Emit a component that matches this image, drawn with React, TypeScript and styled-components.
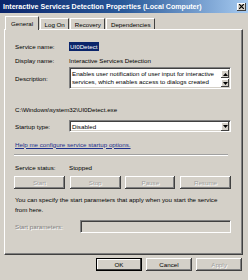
import React from "react";
import styled, { createGlobalStyle, css } from "styled-components";

const Global = createGlobalStyle`
  html, body { margin: 0; padding: 0; background: #d4d0c8; }
  body { font-family: "Liberation Sans", Arial, sans-serif; font-size: 6.2px; color: #000; }
`;

const Window = styled.div`
  width: 248px;
  height: 280px;
  background: #d4d0c8;
  display: flex;
  flex-direction: column;
  overflow: hidden;
`;

const TitleBar = styled.div`
  height: 13px;
  background: linear-gradient(to right, #0a246a 0%, #2a5a9a 50%, #a6caf0 100%);
  display: flex;
  align-items: center;
  padding: 0 2px 0 3px;
  justify-content: space-between;
`;

const TitleText = styled.span`
  color: #fff;
  font-weight: bold;
  font-size: 7.1px;
  white-space: nowrap;
`;

const CloseBtn = styled.div`
  width: 9px;
  height: 8px;
  background: #d4d0c8;
  box-shadow: inset -1px -1px #404040, inset 1px 1px #fff;
  display: flex;
  align-items: center;
  justify-content: center;
`;

const TabStrip = styled.div`
  display: flex;
  align-items: flex-end;
  margin: 3px 0 0 5px;
  height: 13px;
  position: relative;
  z-index: 1;
`;

const Tab = styled.div<{ $active?: boolean }>`
  height: 11px;
  padding: 0 3.5px;
  margin-right: 1px;
  background: #d4d0c8;
  border-top: 1px solid #fff;
  border-left: 1px solid #fff;
  border-right: 1px solid #404040;
  box-sizing: border-box;
  display: flex;
  align-items: center;
  white-space: nowrap;
  ${(p) =>
    p.$active &&
    css`
      margin-bottom: -1px;
      height: 14px;
      padding: 0 5px;
    `}
`;

const Panel = styled.div`
  margin: 0 5px 0 4px;
  height: 226px;
  box-sizing: border-box;
  border-top: 1px solid #fff;
  border-left: 1px solid #fff;
  border-right: 1px solid #404040;
  border-bottom: 1px solid #404040;
  box-shadow: inset -1px -1px #808080;
  padding: 0 11px 0 10px;
  display: flex;
  flex-direction: column;
`;

const Row = styled.div<{ $h: number; $mt?: number }>`
  display: flex;
  align-items: center;
  height: ${(p) => p.$h}px;
  margin-top: ${(p) => p.$mt ?? 0}px;
  white-space: nowrap;
`;

const Label = styled.span<{ $w?: number; $disabled?: boolean }>`
  width: ${(p) => p.$w ?? 54}px;
  flex: none;
  ${(p) =>
    p.$disabled &&
    css`
      color: #808080;
      text-shadow: 1px 1px 0 #fff;
    `}
`;

const Selected = styled.span`
  background: #0a246a;
  color: #fff;
  padding: 1px 1px;
  outline: 1px dotted #d4d0c8;
`;

const Sunken = styled.div<{ $bg?: string }>`
  box-sizing: border-box;
  background: ${(p) => p.$bg ?? "#fff"};
  border-top: 1px solid #808080;
  border-left: 1px solid #808080;
  border-right: 1px solid #fff;
  border-bottom: 1px solid #fff;
  box-shadow: inset 1px 1px #404040, inset -1px -1px #d4d0c8;
`;

const DescBox = styled(Sunken)`
  flex: 1;
  height: 22px;
  display: flex;
  padding: 1px;
`;

const DescText = styled.div`
  flex: 1;
  padding: 1px 0 0 1px;
  line-height: 8px;
  white-space: normal;
  overflow: hidden;
`;

const ScrollCol = styled.div`
  width: 8px;
  display: flex;
  flex-direction: column;
  gap: 1px;
  padding-top: 1px;
`;

const ScrollBtn = styled.div`
  width: 8px;
  height: 9px;
  box-sizing: border-box;
  background: #d4d0c8;
  box-shadow: inset -1px -1px #404040, inset 1px 1px #fff;
  display: flex;
  align-items: center;
  justify-content: center;
`;

const Combo = styled(Sunken)`
  flex: 1;
  height: 12px;
  display: flex;
  align-items: center;
  padding: 0 1px 0 2px;
  justify-content: space-between;
`;

const Link = styled.span`
  color: #1c2f8c;
  text-decoration: underline;
`;

const Separator = styled.div`
  height: 0;
  border-top: 1px solid #a0a0a0;
  border-bottom: 1px solid #fff;
  margin: 5px 3px 0 -1px;
`;

const ButtonRow = styled.div`
  display: flex;
  justify-content: space-between;
  margin-top: 4px;
  margin-left: -1px;
`;

const Btn = styled.div<{ $w?: number; $disabled?: boolean; $default?: boolean }>`
  width: ${(p) => p.$w ?? 51}px;
  height: 13px;
  box-sizing: border-box;
  background: #d4d0c8;
  display: flex;
  align-items: center;
  justify-content: center;
  box-shadow: ${(p) =>
    p.$default
      ? "inset 0 0 0 1px #000, inset -2px -2px #404040, inset 2px 2px #fff"
      : "inset -1px -1px #404040, inset 1px 1px #fff, inset -2px -2px #808080"};
  ${(p) =>
    p.$disabled &&
    css`
      color: #a0a0a0;
      text-shadow: 1px 1px 0 #fff;
    `}
`;

const Para = styled.div`
  margin-top: 6px;
  line-height: 10px;
  white-space: normal;
  padding-right: 2px;
`;

const ParamBox = styled(Sunken)`
  flex: 1;
  height: 13px;
`;

const Footer = styled.div`
  display: flex;
  justify-content: flex-end;
  gap: 4px;
  padding-right: 6px;
  margin-top: 3px;
`;

const Arrow: React.FC<{ up?: boolean }> = ({ up }) => (
  <svg width="5" height="3" viewBox="0 0 5 3">
    <path d={up ? "M2.5 0 L5 3 L0 3 Z" : "M0 0 L5 0 L2.5 3 Z"} fill="#000" />
  </svg>
);

export default function App() {
  return (
    <>
      <Global />
      <Window>
        <TitleBar>
          <TitleText>Interactive Services Detection Properties (Local Computer)</TitleText>
          <CloseBtn>
            <svg width="5" height="5" viewBox="0 0 5 5">
              <path d="M0 0 L5 5 M5 0 L0 5" stroke="#000" strokeWidth="1.2" />
            </svg>
          </CloseBtn>
        </TitleBar>
        <TabStrip>
          <Tab $active>General</Tab>
          <Tab>Log On</Tab>
          <Tab>Recovery</Tab>
          <Tab>Dependencies</Tab>
        </TabStrip>
        <Panel>
          <Row $h={10} $mt={11}>
            <Label>Service name:</Label>
            <Selected>UI0Detect</Selected>
          </Row>
          <Row $h={10} $mt={4}>
            <Label>Display name:</Label>
            <span>Interactive Services Detection</span>
          </Row>
          <Row $h={22} $mt={2}>
            <Label>Description:</Label>
            <DescBox>
              <DescText>
                Enables user notification of user input for interactive services, which enables access to
                dialogs created
              </DescText>
              <ScrollCol>
                <ScrollBtn>
                  <Arrow up />
                </ScrollBtn>
                <ScrollBtn>
                  <Arrow />
                </ScrollBtn>
              </ScrollCol>
            </DescBox>
          </Row>
          <Row $h={10} $mt={15}>
            <span>C:\Windows\system32\UI0Detect.exe</span>
          </Row>
          <Row $h={12} $mt={6}>
            <Label>Startup type:</Label>
            <Combo>
              <span>Disabled</span>
              <ScrollBtn>
                <Arrow />
              </ScrollBtn>
            </Combo>
          </Row>
          <Row $h={10} $mt={7}>
            <Link>Help me configure service startup options.</Link>
          </Row>
          <Separator />
          <Row $h={10} $mt={6}>
            <Label>Service status:</Label>
            <span>Stopped</span>
          </Row>
          <ButtonRow>
            <Btn $disabled>Start</Btn>
            <Btn $disabled>Stop</Btn>
            <Btn $disabled $w={50}>Pause</Btn>
            <Btn $disabled>Resume</Btn>
          </ButtonRow>
          <Para>
            You can specify the start parameters that apply when you start the service from here.
          </Para>
          <Row $h={13} $mt={5}>
            <Label $w={65} $disabled>
              Start parameters:
            </Label>
            <ParamBox $bg="#d4d0c8" />
          </Row>
        </Panel>
        <Footer>
          <Btn $w={46} $default>OK</Btn>
          <Btn $w={46}>Cancel</Btn>
          <Btn $w={46} $disabled>Apply</Btn>
        </Footer>
      </Window>
    </>
  );
}
